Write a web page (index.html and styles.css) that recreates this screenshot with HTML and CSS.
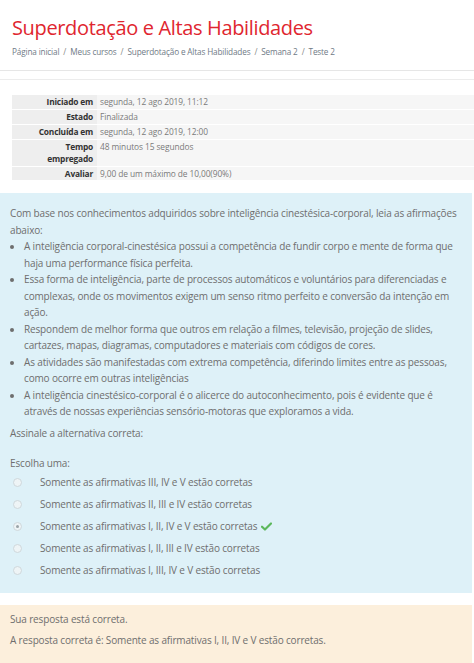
FILE: index.html
```html
<!DOCTYPE html>
<html lang="pt-BR">
<head>
<meta charset="utf-8">
<title>Teste 2</title>
<link rel="stylesheet" href="styles.css">
</head>
<body>
<header class="page-header">
  <h1 class="title">Superdotação e Altas Habilidades</h1>
  <nav class="breadcrumb">
    <span>Página inicial</span><span class="sep">/</span><span>Meus cursos</span><span class="sep">/</span><span>Superdotação e Altas Habilidades</span><span class="sep">/</span><span>Semana 2</span><span class="sep">/</span><span>Teste 2</span>
  </nav>
</header>
<main class="main">
  <table class="summary">
    <tr><th>Iniciado em</th><td>segunda, 12 ago 2019, 11:12</td></tr>
    <tr><th>Estado</th><td>Finalizada</td></tr>
    <tr><th>Concluída em</th><td>segunda, 12 ago 2019, 12:00</td></tr>
    <tr><th>Tempo<br>empregado</th><td>48 minutos 15 segundos</td></tr>
    <tr><th>Avaliar</th><td>9,00 de um máximo de 10,00(90%)</td></tr>
  </table>

  <section class="formulation">
    <p class="qtext">Com base nos conhecimentos adquiridos sobre inteligência cinestésica-corporal, leia as afirmações abaixo:</p>
    <ul class="statements">
      <li>A inteligência corporal-cinestésica possui a competência de fundir corpo e mente de forma que haja uma performance física perfeita.</li>
      <li>Essa forma de inteligência, parte de processos automáticos e voluntários para diferenciadas e complexas, onde os movimentos exigem um senso ritmo perfeito e conversão da intenção em ação.</li>
      <li>Respondem de melhor forma que outros em relação a filmes, televisão, projeção de slides, cartazes, mapas, diagramas, computadores e materiais com códigos de cores.</li>
      <li>As atividades são manifestadas com extrema competência, diferindo limites entre as pessoas, como ocorre em outras inteligências</li>
      <li>A inteligência cinestésico-corporal é o alicerce do autoconhecimento, pois é evidente que é através de nossas experiências sensório-motoras que exploramos a vida.</li>
    </ul>
    <p class="prompt">Assinale a alternativa correta:</p>
    <p class="choose">Escolha uma:</p>
    <div class="answers">
      <div class="answer"><span class="radio"></span><span>Somente as afirmativas III, IV e V estão corretas</span></div>
      <div class="answer"><span class="radio"></span><span>Somente as afirmativas II, III e IV estão corretas</span></div>
      <div class="answer"><span class="radio checked"></span><span>Somente as afirmativas I, II, IV e V estão corretas</span><svg class="tick" viewBox="0 0 12 10" width="11" height="9"><path d="M1 5.2 L4.3 8.4 L11 1.6" fill="none" stroke="#5cb85c" stroke-width="2.4" stroke-linecap="round" stroke-linejoin="round"/></svg></div>
      <div class="answer"><span class="radio"></span><span>Somente as afirmativas I, II, III e IV estão corretas</span></div>
      <div class="answer"><span class="radio"></span><span>Somente as afirmativas I, III, IV e V estão corretas</span></div>
    </div>
  </section>

  <section class="outcome">
    <p>Sua resposta está correta.</p>
    <p>A resposta correta é: Somente as afirmativas I, II, IV e V estão corretas.</p>
  </section>
</main>
</body>
</html>
```

FILE: styles.css
```css
* { box-sizing: border-box; }
html, body { margin: 0; padding: 0; background: #fff; }
body {
  font-family: "Open Sans", "Noto Sans", sans-serif;
  color: #6e6e6e;
  font-size: 10px;
  width: 474px;
  overflow: hidden;
}
p { margin: 0; }

.page-header {
  padding: 15px 12px 11px;
  border-bottom: 1px solid #e6e6e6;
}
.title {
  margin: 0;
  font-weight: 400;
  font-size: 20px;
  line-height: 26px;
  color: #e0262f;
  letter-spacing: -0.35px;
}
.breadcrumb {
  margin-top: 4px;
  font-size: 8.2px;
  line-height: 14px;
  color: #6f7a86;
  letter-spacing: -0.15px;
  display: flex;
}
.breadcrumb .sep { margin: 0 4px; color: #888; }

.main {
  margin-top: 8px;
  border-top: 1px solid #ececec;
  padding-top: 15px;
}

.summary {
  margin-left: 12px;
  width: calc(100% - 12px);
  border-collapse: collapse;
  font-size: 8.4px;
  line-height: 11.9px;
}
.summary th, .summary td {
  padding: 1px 4px 1px 3px;
  border-bottom: 1px solid #fff;
  vertical-align: top;
}
.summary th {
  width: 85px;
  text-align: right;
  font-weight: 700;
  color: #333;
  background: #eeeeee;
  letter-spacing: -0.2px;
}
.summary td {
  color: #7a7a7a;
  background: #f6f6f6;
  letter-spacing: -0.1px;
}

.formulation {
  margin-top: 12px;
  width: 472px;
  background: #def1f8;
  padding: 12px 10px 14px;
  line-height: 16.5px;
  letter-spacing: -0.15px;
}
.statements {
  margin: 0;
  padding-left: 14px;
}
.prompt { margin-top: 5px; }
.choose { margin-top: 14px; }
.answers {
  margin-top: 2px;
  display: flex;
  flex-direction: column;
  gap: 5.6px;
}
.answer {
  display: flex;
  align-items: center;
  height: 16.5px;
  padding-left: 3px;
}
.radio {
  width: 9px;
  height: 9px;
  border: 1px solid #cfd8dc;
  border-radius: 50%;
  background: #eef4f6;
  margin-right: 18px;
  position: relative;
}
.radio.checked::after {
  content: "";
  position: absolute;
  left: 2px; top: 2px;
  width: 3px; height: 3px;
  border-radius: 50%;
  background: #9aa3a8;
}
.tick { margin-left: 4px; }

.outcome {
  margin-top: 12px;
  width: 472px;
  background: #fcefdc;
  padding: 6px 10px 14px;
  line-height: 16.5px;
  letter-spacing: -0.15px;
}
.outcome p + p { margin-top: 5px; }
```
